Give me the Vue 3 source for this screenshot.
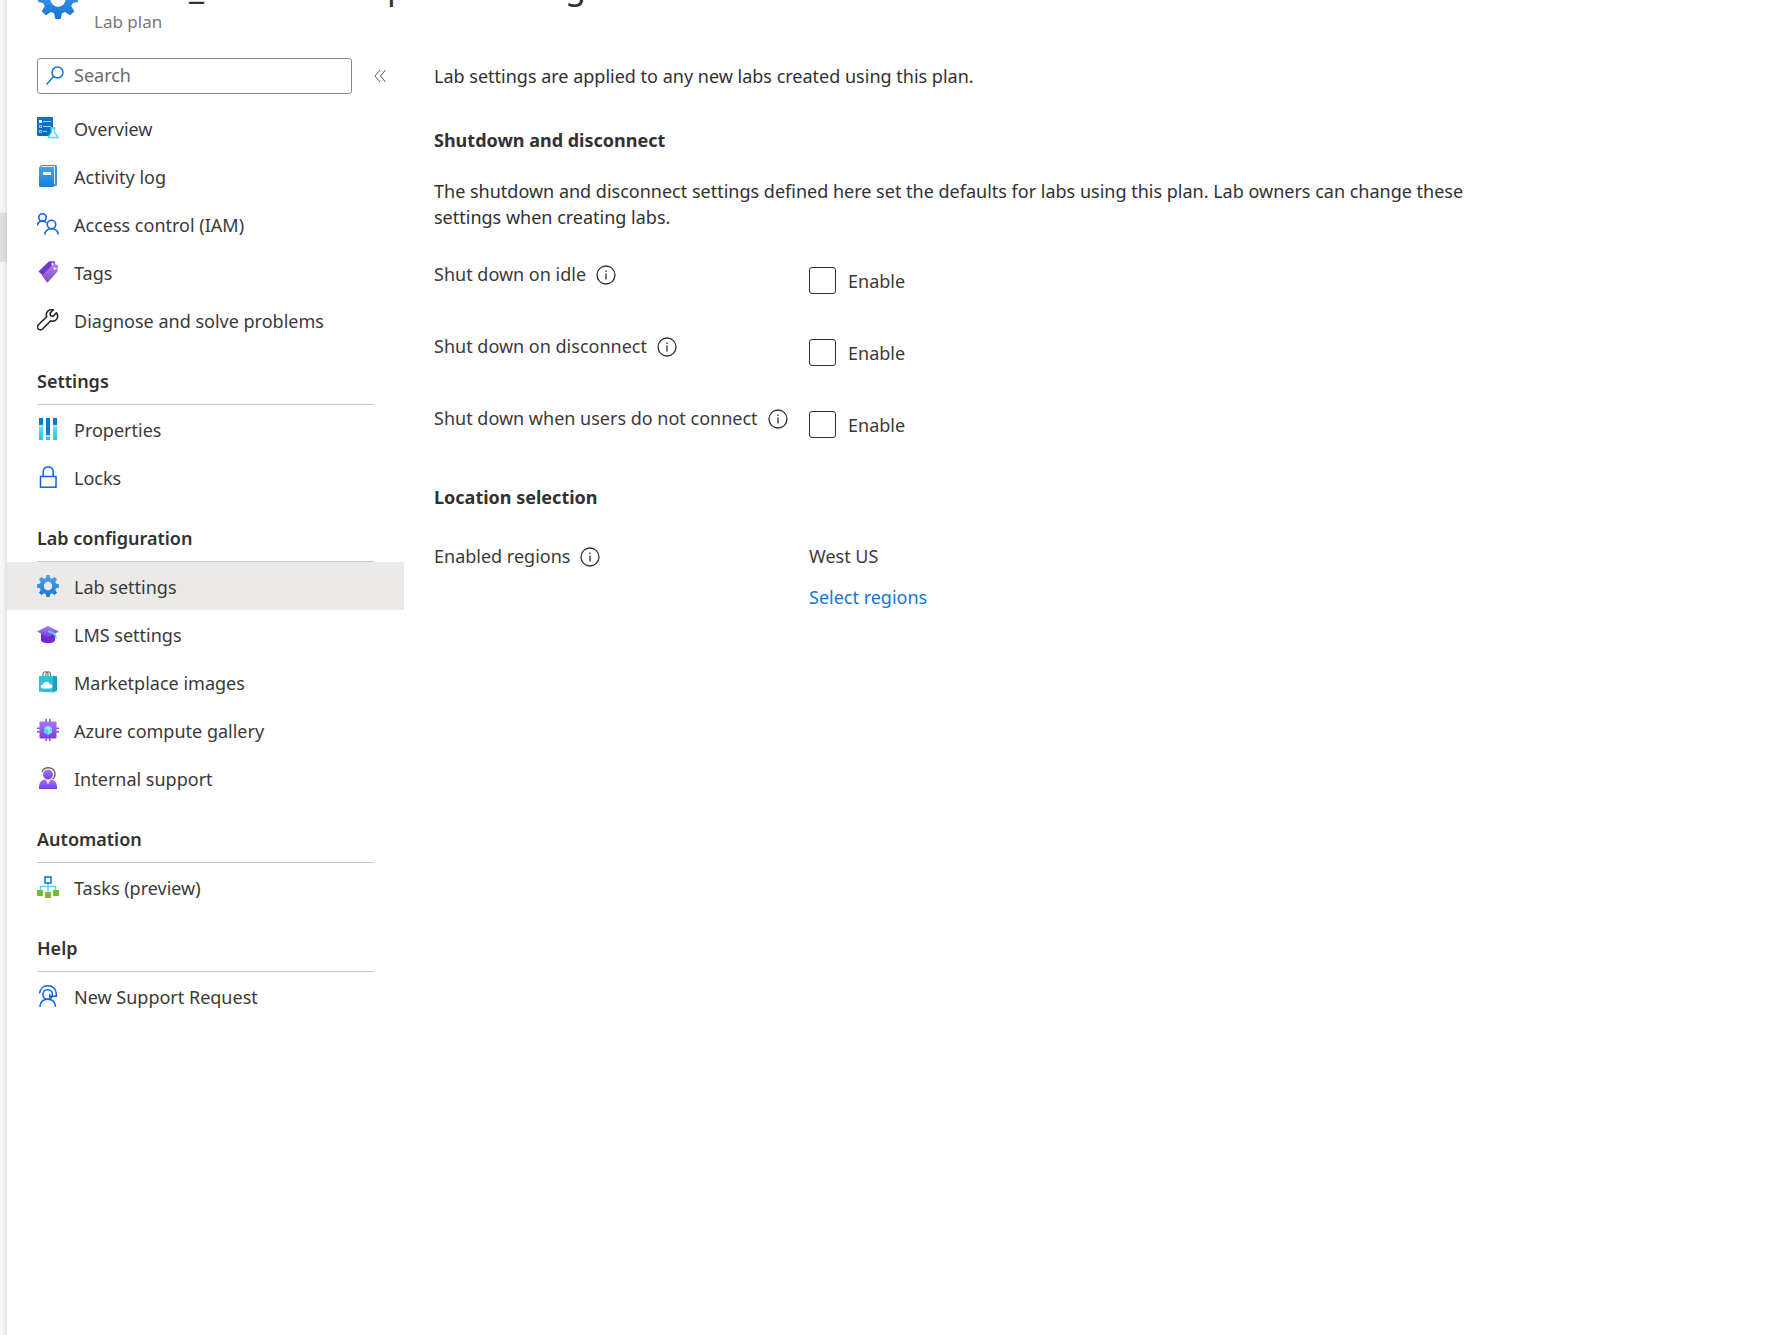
<script setup>
import { ref } from 'vue'

const sections = [
  {
    title: '',
    items: [
      { label: 'Overview', icon: 'overview' },
      { label: 'Activity log', icon: 'log' },
      { label: 'Access control (IAM)', icon: 'iam' },
      { label: 'Tags', icon: 'tags' },
      { label: 'Diagnose and solve problems', icon: 'wrench' },
    ],
  },
  {
    title: 'Settings',
    items: [
      { label: 'Properties', icon: 'properties' },
      { label: 'Locks', icon: 'lock' },
    ],
  },
  {
    title: 'Lab configuration',
    items: [
      { label: 'Lab settings', icon: 'gear', active: true },
      { label: 'LMS settings', icon: 'cap' },
      { label: 'Marketplace images', icon: 'bag' },
      { label: 'Azure compute gallery', icon: 'chip' },
      { label: 'Internal support', icon: 'agent' },
    ],
  },
  { title: 'Automation', items: [{ label: 'Tasks (preview)', icon: 'tasks' }] },
  { title: 'Help', items: [{ label: 'New Support Request', icon: 'support' }] },
]

const icons = {
  overview: `<rect x="0" y="0" width="16" height="19" rx="1" fill="#0f6cbd"/><rect x="0" y="0" width="16" height="9" rx="1" fill="#0a7ad6" opacity=".5"/><rect x="2" y="3" width="3" height="3" fill="#fff"/><rect x="2.500" y="8.500" width="2" height="2" fill="none" stroke="#8cc4ee"/><rect x="2.500" y="13.500" width="2" height="2" fill="none" stroke="#8cc4ee"/><path d="M6 4.500h8M6 9.500h8M6 14.500h4" stroke="#9fd0f5"/><path d="M14.500 11.500h3v3.500l3.500 5.500h-10l3.500-5.500z" fill="#fff" stroke="#50d8f5" stroke-width="1.300"/><path d="M13.500 11h5" stroke="#50d8f5" stroke-width="1.500"/>`,
  log: `<rect x="3" y="0" width="17" height="21" rx="1.500" fill="#4a8fce"/><rect x="4" y="1" width="14" height="18" fill="#d8ebfb"/><path d="M2 3q0-2 2-2h0q0 1 1 1h12v20h-13.500q-1.500 0-1.500-1.500z" fill="url(#g-blue)"/><rect x="6" y="7" width="8" height="3" fill="#fff"/>`,
  iam: `<g fill="none" stroke="#0f62e0" stroke-width="1.600"><circle cx="5.500" cy="4.500" r="3.700"/><path d="M.5 12.500c.3-3 2.300-4.500 5-4.500 1.700 0 3 .6 4 1.800"/><circle cx="14.500" cy="11.500" r="4.200"/><path d="M7.800 21.500c.4-3.800 3-5.800 6.700-5.800s6.300 2 6.700 5.800"/></g>`,
  tags: `<path d="M1.500 10.500L11 1.200q.8-.9 2-.9l4 0q1 0 1 1l-.5 4-10 11z" fill="#7432d2"/><path d="M5 14.500L16 3.200q.6-.5 1.300-.3l2.700.8q1 .3.9 1.300l-.4 4.500q0 .8-.6 1.400l-8.700 10q-.8.800-1.600 0z" fill="url(#g-tag)"/><path d="M15.500 1.500v3M14 3h3M17.800 6v3M16.300 7.500h3" stroke="#f3eafd" stroke-width="1.100"/>`,
  wrench: `<path d="M19.500 3.800l-3.300 3.400-2.600-.4-.5-2.700 3.300-3.300c-2.600-.8-5.600.4-6.700 3-.5 1.200-.4 2.700 0 3.900L1.400 15.800c-1.200 1.200-1.200 3 0 4.200s3 1.200 4.200 0l8.100-8.200c1.500.6 3.300.4 4.700-.5 2.400-1.500 3.100-4.700 1.100-7.500z" fill="#fff" stroke="#222" stroke-width="1.600" stroke-linejoin="round"/>`,
  properties: `<g><path d="M2 0h4v7h-4zM9 0h4v17h-4zM16 0h4v7h-4z" fill="#0f78d0"/><path d="M2 9h4v13h-4zM9 19h4v3h-4zM16 9h4v13h-4z" fill="url(#g-cyan)"/><path d="M2 7h4v2h-4zM9 17h4v2h-4zM16 7h4v2h-4z" fill="#cfd8df"/></g>`,
  lock: `<g fill="none" stroke="#0f62e0" stroke-width="1.500"><rect x="3.500" y="10.500" width="15.500" height="10.700"/><path d="M6.200 10.500v-4.500c0-3 2-5 5-5s5 2 5 5v4.500"/></g>`,
  gear: `<path fill-rule="evenodd" fill="url(#g-gear)" d="M9.500 0h3l.7 3 1.700.7 2.800-1.700 2.300 2.200-1.700 2.700.7 1.700 3 .8v3.100l-3 .8-.7 1.700 1.700 2.700-2.300 2.200-2.800-1.700-1.700.7-.7 3.100h-3l-.7-3.100-1.700-.7-2.800 1.700-2.300-2.200 1.700-2.700-.7-1.700-3-.8v-3.100l3-.8.7-1.700-1.700-2.700 2.300-2.200 2.800 1.700 1.700-.7zM11 6.800a4.200 4.200 0 1 0 0 8.400a4.200 4.200 0 1 0 0-8.400z"/>`,
  cap: `<path d="M4 10h14v7.500c-1.500 3.500-12.500 3.500-14 0z" fill="#6f2bd0"/><path d="M0 8.500l11-5.500L22 8.500l-11 5.800z" fill="url(#g-purple)"/><path d="M11 8.300c4 .4 7.500 2 8.300 7" fill="none" stroke="#50d8f5" stroke-width="1.800"/>`,
  bag: `<g fill="none" stroke="#777" stroke-width="1.200"><path d="M6 6v-3c0-3 5-3 5 0v3M9 6v-3c0-3 4.500-3 4.500 0v3"/></g><path d="M2 5l14 0v16.500l-14-1z" fill="#32bedd"/><path d="M16 5h4l0 14.500-4 2z" fill="#1f9fc0"/><path d="M6 17.500c-3 0-3-4 0-4 .5-3.500 6-3.800 6.500-.5 3.800 0 3.800 4.500.5 4.500z" fill="#fff"/>`,
  chip: `<path d="M9.200 0v22M12.800 0v22M0 9.200h22M0 12.800h22" stroke="#8a4be8" stroke-width="1.500"/><rect x="2.500" y="2.500" width="17" height="17" rx="1" fill="url(#g-purple)"/><path d="M11 6.800l4 2.200v4.500l-4 2.200-4-2.200v-4.500z" fill="#9cebff"/><path d="M11 11v4.700l-4-2.200v-4.500z" fill="#50c8f0"/><path d="M11 11v4.700l4-2.200v-4.500z" fill="#7fdcf5"/>`,
  agent: `<path d="M5 5c1.500-6 12.500-6 13 2 .1 2-.6 4-2.500 5" fill="none" stroke="#666" stroke-width="1.400"/><circle cx="11" cy="7.500" r="5" fill="url(#g-purple)"/><path d="M2 22c-.3-5 1.500-9 5.500-9.500h7c4 .5 5.800 4.500 5.500 9.500z" fill="url(#g-purple)"/><path d="M8.500 12.500h5l-2.500 5z" fill="#efe4fd"/>`,
  tasks: `<path d="M3.500 14v-3.500h15v3.500M11 6.500v10" fill="none" stroke="#50d8f5" stroke-width="1.500"/><rect x="8" y="1" width="6" height="6" fill="#fff" stroke="#0f78d0" stroke-width="1.600"/><path d="M0 14h6v6H0zM8 16h6v6h-6zM16 14h6v6h-6z" fill="#76bc2d"/>`,
  support: `<g fill="none" stroke="#0f62e0" stroke-width="1.500"><path d="M2.500 8.500c.4-5 4-7.800 8.300-7.800 4.800 0 8.500 3.500 8.500 8v2.600h-5.800"/><circle cx="10.700" cy="9.500" r="4.800"/><path d="M2.800 21.800c.5-4.800 3.200-7.500 7.900-7.500s7.400 2.700 7.900 7.500"/><path d="M12.800 9.300v2.800l3-.8"/></g>`,
}

const toggles = ref([
  { id: 'idle', label: 'Shut down on idle', on: false },
  { id: 'disconnect', label: 'Shut down on disconnect', on: false },
  { id: 'noconnect', label: 'Shut down when users do not connect', on: false },
])
const query = ref('')
</script>

<template>
  <div class="portal">
    <svg class="defs" width="0" height="0" aria-hidden="true">
      <defs>
        <linearGradient id="g-blue" x1="0" y1="0" x2="0" y2="1"><stop offset="0" stop-color="#4ba3f2" /><stop offset="1" stop-color="#1580d8" /></linearGradient>
        <linearGradient id="g-gear" x1="0" y1="0" x2="0" y2="1"><stop offset="0" stop-color="#5ea0ef" /><stop offset="1" stop-color="#0f78d4" /></linearGradient>
        <linearGradient id="g-purple" x1="0" y1="0" x2="0" y2="1"><stop offset="0" stop-color="#a67af4" /><stop offset="1" stop-color="#7a3ddf" /></linearGradient>
        <linearGradient id="g-tag" x1="0" y1="0" x2="0" y2="1"><stop offset="0" stop-color="#b77af4" /><stop offset="1" stop-color="#8250c4" /></linearGradient>
        <linearGradient id="g-cyan" x1="0" y1="0" x2="0" y2="1"><stop offset="0" stop-color="#50e6ff" /><stop offset="1" stop-color="#32bedd" /></linearGradient>
      </defs>
    </svg>
    <div class="edge"><div class="thumb"></div></div>
    <div class="blade">
      <header class="head">
        <svg class="head-icon" viewBox="0 0 22 22" v-html="icons.gear"></svg>
        <div>
          <h1 class="title"><span>_</span><span>p</span><span>g</span></h1>
          <p class="subtitle">Lab plan</p>
        </div>
      </header>
      <div class="body">
        <nav class="menu">
          <div class="search-row">
            <label class="search">
              <svg width="18" height="20" viewBox="0 0 18 20" fill="none" stroke="#0f78d4" stroke-width="1.500"><circle cx="11.500" cy="6.500" r="5.500" /><path d="M7.500 10.500L.5 18.500" /></svg>
              <input v-model="query" type="text" placeholder="Search" aria-label="Search" />
            </label>
            <button class="collapse" type="button" aria-label="Collapse menu">
              <svg width="12" height="14" viewBox="0 0 12 14" fill="none" stroke="#555"><path d="M6 1L1 7l5 6M11.500 1l-5 6 5 6" /></svg>
            </button>
          </div>
          <section v-for="s in sections" :key="s.title">
            <h2 v-if="s.title">{{ s.title }}</h2>
            <a v-for="i in s.items" :key="i.label" href="#" class="item" :class="{ active: i.active }">
              <svg class="icon" viewBox="0 0 22 22" v-html="icons[i.icon]"></svg>
              <span>{{ i.label }}</span>
            </a>
          </section>
        </nav>
        <main class="content">
          <p class="intro">Lab settings are applied to any new labs created using this plan.</p>
          <h3>Shutdown and disconnect</h3>
          <p class="desc">The shutdown and disconnect settings defined here set the defaults for labs using this plan. Lab owners can change these settings when creating labs.</p>
          <div v-for="t in toggles" :key="t.id" class="row toggle">
            <div class="name">
              <span>{{ t.label }}</span>
              <svg class="info" viewBox="0 0 20 20"><circle cx="10" cy="10" r="9" fill="none" stroke="#323130" stroke-width="1.300" /><path d="M10 8.500v6M10 5.500v1.500" stroke="#323130" stroke-width="1.300" /></svg>
            </div>
            <label class="check"><input v-model="t.on" type="checkbox" /><span>Enable</span></label>
          </div>
          <h3 class="location">Location selection</h3>
          <div class="row">
            <div class="name">
              <span>Enabled regions</span>
              <svg class="info" viewBox="0 0 20 20"><circle cx="10" cy="10" r="9" fill="none" stroke="#323130" stroke-width="1.300" /><path d="M10 8.500v6M10 5.500v1.500" stroke="#323130" stroke-width="1.300" /></svg>
            </div>
            <div class="regions">
              <span>West US</span>
              <a href="#">Select regions</a>
            </div>
          </div>
        </main>
      </div>
    </div>
  </div>
</template>

<style>
body {
  margin: 0;
  background: #fff;
}
</style>

<style scoped>
.portal {
  display: flex;
  min-height: 100vh;
  overflow: hidden;
  font-family: "Segoe UI", "Noto Sans", "Open Sans", sans-serif;
  font-size: 18px;
  line-height: 26px;
  color: #3b3a39;
}
.portal * {
  box-sizing: border-box;
}
.defs {
  position: absolute;
}
.edge {
  width: 7px;
  flex: none;
  padding-top: 213px;
  background: linear-gradient(90deg, #f5f5f5 40%, #e2e2e2);
}
.thumb {
  height: 49px;
  background: linear-gradient(90deg, #e1dfdd 40%, #cfcdcb);
}
.blade {
  flex: 1;
  min-width: 0;
}
h1, h2, h3, p {
  margin: 0;
  color: #323130;
}
.head {
  display: flex;
  align-items: flex-end;
  gap: 16px;
  height: 36px;
  padding-left: 31px;
}
.head-icon {
  flex: none;
  width: 40px;
  height: 40px;
  margin-bottom: 17px;
}
.title {
  display: grid;
  grid-template-columns: 198px 178px auto;
  padding-left: 95px;
  font-size: 34px;
  line-height: 44px;
  font-weight: 400;
}
.subtitle {
  font-size: 17px;
  line-height: 28px;
  color: #797775;
}
.body {
  display: flex;
  align-items: flex-start;
}
.menu {
  flex: none;
  width: 397px;
}
.search-row {
  display: flex;
  align-items: center;
  gap: 20px;
  padding: 22px 0 10px 30px;
}
.search {
  display: flex;
  align-items: center;
  gap: 10px;
  width: 315px;
  height: 36px;
  padding: 0 8px;
  border: 1px solid #8a8886;
  border-radius: 3px;
}
.search input {
  flex: 1;
  min-width: 0;
  padding: 0 0 2px;
  border: 0;
  outline: 0;
  background: none;
  font: inherit;
  color: inherit;
}
.search input::placeholder {
  color: #6b6967;
  opacity: 1;
}
.collapse {
  display: flex;
  padding: 2px;
  border: 0;
  background: none;
}
h2 {
  height: 61px;
  margin: 0 30px;
  padding-top: 24px;
  border-bottom: 1px solid #c8c6c4;
  font-size: 18px;
  line-height: 26px;
  font-weight: 600;
}
.item {
  display: flex;
  align-items: center;
  gap: 15px;
  height: 48px;
  padding-left: 30px;
  color: inherit;
  text-decoration: none;
}
.item span,
.check span {
  padding-top: 2px;
}
.item.active {
  background: #ebeae9;
}
.icon {
  flex: none;
  width: 22px;
  height: 22px;
}
.content {
  flex: 1;
  min-width: 0;
  max-width: 1104px;
  padding: 27px 30px 0;
}
h3 {
  margin-top: 38px;
  font-size: 18px;
  line-height: 26px;
  font-weight: 700;
}
.desc {
  margin: 25px 0 31px;
}
.row {
  display: flex;
}
.toggle {
  height: 72px;
}
.name {
  display: flex;
  align-items: flex-start;
  gap: 10px;
  width: 375px;
}
.info {
  width: 20px;
  height: 20px;
  margin-top: 4px;
}
.check {
  display: flex;
  align-items: center;
  gap: 12px;
  height: 38px;
}
.check input {
  appearance: none;
  width: 27px;
  height: 27px;
  margin: 0;
  border: 1px solid #323130;
  border-radius: 3px;
}
.location {
  margin: 7px 0 33px;
}
.regions {
  display: flex;
  flex-direction: column;
  gap: 15px;
}
.regions a {
  color: #0f78d4;
  text-decoration: none;
}
</style>
